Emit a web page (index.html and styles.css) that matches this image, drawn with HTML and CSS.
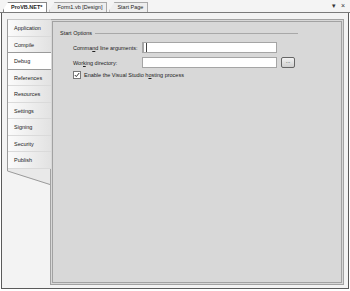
FILE: index.html
```html
<!DOCTYPE html>
<html>
<head>
	<title>ProVB.NET Properties</title>
	<link rel="stylesheet" href="styles.css">
</head>
<body>
	<div class="tabstrip">
		<div class="doc_tab active">ProVB.NET*</div>
		<div class="doc_tab">Form1.vb [Design]</div>
		<div class="doc_tab">Start Page</div>
		<div class="strip_tools"><span class="drop">&#9662;</span><span class="close">&#215;</span></div>
	</div>

	<div class="frame">
		<div class="sidebar">
			<ul class="side_tabs">
				<li>Application</li>
				<li>Compile</li>
				<li class="selected">Debug</li>
				<li>References</li>
				<li>Resources</li>
				<li>Settings</li>
				<li>Signing</li>
				<li>Security</li>
				<li>Publish</li>
			</ul>
			<svg class="side_end" width="44" height="16" viewBox="0 0 44 16">
				<polygon points="0,0 43,0 43,16 0,2" fill="#e9e9e9"/>
				<polyline points="0.5,0 0.5,2 43,15.5" fill="none" stroke="#9a9a9a" stroke-width="1"/>
			</svg>
		</div>

		<div class="panel">
			<div class="group_head">
				<span>Start Options</span>
				<div class="rule"></div>
			</div>
			<div class="form_grid">
				<label>Comma<u>n</u>d line arguments:</label>
				<div class="field caret"></div>
				<div></div>
				<label>Wor<u>k</u>ing directory:</label>
				<div class="field"></div>
				<div class="browse">...</div>
			</div>
			<div class="check_row">
				<span class="check_box">
					<svg width="6" height="6" viewBox="0 0 6 6"><polyline points="0.8,3 2.3,4.6 5.2,1" fill="none" stroke="#333" stroke-width="1"/></svg>
				</span>
				<span>Enable the Visual Studio h<u>o</u>sting process</span>
			</div>
		</div>
	</div>
</body>
</html>
```

FILE: styles.css
```css
body {
	margin: 0;
	background-color: #fff;
	font-family: "Liberation Sans", Arial, sans-serif;
	font-size: 5.5px;
	color: #222;
}

/* document tabs along the top */
.tabstrip {
	height: 12px;
	display: flex;
	align-items: flex-end;
	padding-left: 3px;
	background-color: #f4f4f4;
	border-bottom: 1px solid #7a7a7a;
}
.doc_tab {
	height: 9px;
	line-height: 9px;
	padding: 0 4px 0 7px;
	margin-right: 2px;
	background-color: #eeeeee;
	border: 1px solid #a9a9a9;
	border-bottom: none;
	clip-path: polygon(5px 0, 100% 0, 100% 100%, 0 100%, 0 8px);
}
.doc_tab.active {
	background-color: #fff;
	font-weight: bold;
	border-color: #888;
}
.strip_tools {
	margin-left: auto;
	margin-right: 5px;
	align-self: center;
	display: flex;
	gap: 5px;
	font-size: 7px;
	color: #333;
}

/* outer frame */
.frame {
	box-sizing: border-box;
	height: 276px;
	margin: 0 1px;
	border: 1px solid #5a5a5a;
	border-top: none;
	background-color: #f3f3f3;
	display: flex;
	padding: 6px 4px 3px 5px;
}

.sidebar {
	width: 44px;
	margin-right: -1px;
	position: relative;
	z-index: 1;
}
.side_tabs {
	list-style: none;
	margin: 0;
	padding: 0;
	border-left: 1px solid #9a9a9a;
	border-top: 1px solid #c8c8c8;
}
.side_tabs li {
	height: 16.5px;
	line-height: 16px;
	padding-left: 6px;
	box-sizing: border-box;
	background: linear-gradient(to right, #fbfbfb, #e2e2e2);
	border-bottom: 1px solid #dadada;
}
.side_tabs li.selected {
	background: #fff;
	border-top: 1px solid #9a9a9a;
	border-bottom: 1px solid #9a9a9a;
	margin-top: -1px;
	height: 17.5px;
}
.side_end {
	display: block;
}

/* property page */
.panel {
	flex: 1;
	background-color: #d8d8d8;
	border: 3px double #a2a2a2;
	padding: 8px 0 0 7px;
}
.group_head {
	display: flex;
	align-items: center;
	gap: 3px;
	width: 238px;
}
.rule {
	flex: 1;
	border-top: 1px solid #a8a8a8;
}
.form_grid {
	display: grid;
	grid-template-columns: 69px 135px 18px;
	grid-auto-rows: 11px;
	row-gap: 4px;
	align-items: center;
	margin: 6px 0 0 13px;
}
.field {
	height: 11px;
	box-sizing: border-box;
	background-color: #fff;
	border: 1px solid #a5a5a5;
}
.caret {
	border-left: 2px solid #a5a5a5;
	box-shadow: inset 2px 0 0 #fff, inset 3px 0 0 #444;
}
.browse {
	margin-left: 4px;
	height: 11px;
	width: 14px;
	box-sizing: border-box;
	border: 1px solid #666;
	border-radius: 2px;
	background: linear-gradient(#f2f2f2, #cfcfcf);
	text-align: center;
	line-height: 7px;
}
.check_row {
	display: flex;
	align-items: center;
	gap: 3px;
	margin: 3px 0 0 13px;
}
.check_box {
	width: 6px;
	height: 6px;
	border: 1px solid #777;
	background-color: #fff;
	display: flex;
}
```
